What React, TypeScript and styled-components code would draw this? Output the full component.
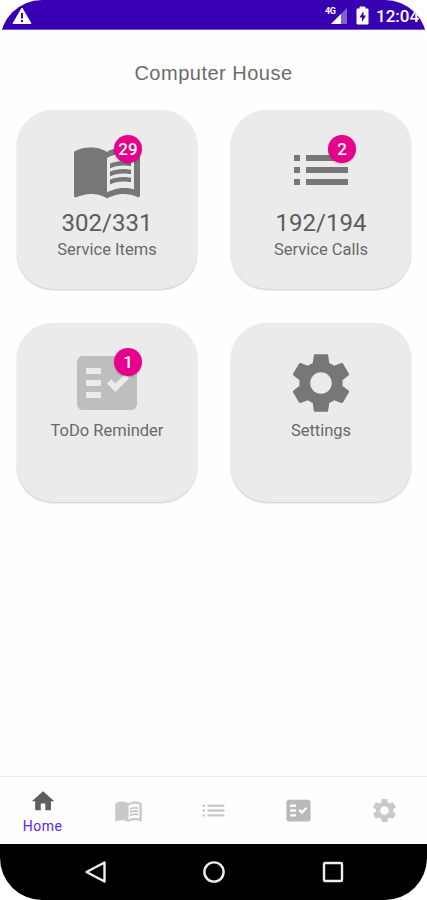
import React from 'react';
import styled, { createGlobalStyle } from 'styled-components';
import { MdMenuBook, MdList, MdFactCheck, MdSettings } from 'react-icons/md';

const GlobalStyle = createGlobalStyle`
  * { box-sizing: border-box; }
  body { margin: 0; background: #fff; font-family: Roboto, sans-serif; }
`;

const Screen = styled.div`
  width: 427px;
  height: 900px;
  display: flex;
  flex-direction: column;
  overflow: hidden;
  border-radius: 42px;
  background: #fefefe;
`;

const StatusBar = styled.header`
  height: 30px;
  flex: none;
  display: flex;
  align-items: center;
  padding: 2px 7px 0 12px;
  background: #3700b3;
  border-bottom: 1px solid #7257c4;
  color: #fff;
`;

const StatusIcons = styled.div`
  margin-left: auto;
  display: flex;
  align-items: center;
`;

const Clock = styled.span`
  width: 44px;
  margin-left: 7px;
  font-size: 17px;
  line-height: 20px;
  font-weight: 500;
  white-space: nowrap;
`;

const Title = styled.h1`
  margin: 30px 0 0;
  height: 26px;
  text-align: center;
  font: 400 20px/26px 'Liberation Sans', Arial, sans-serif;
  letter-spacing: 0.5px;
  color: #6b6b6b;
`;

const Main = styled.main`
  flex: 1;
`;

const Cards = styled.section`
  display: grid;
  grid-template-columns: 180px 180px;
  grid-auto-rows: 179px;
  gap: 34px;
  padding: 24px 0 0 17px;
`;

const Card = styled.article`
  display: flex;
  flex-direction: column;
  align-items: center;
  padding-top: 24px;
  border-radius: 36px;
  background: #ebebeb;
  box-shadow: 0 1px 2px rgba(0, 0, 0, 0.22);
`;

const IconHolder = styled.div<{ $color: string }>`
  position: relative;
  height: 72px;
  color: ${(p) => p.$color};
  font-size: 72px;
  line-height: 0;
`;

const Badge = styled.span`
  position: absolute;
  top: 1px;
  left: 43px;
  width: 28px;
  height: 28px;
  border-radius: 50%;
  background: #e6008c;
  box-shadow: 0 1px 2px rgba(0, 0, 0, 0.2);
  color: #fff;
  text-align: center;
  font-size: 17px;
  font-weight: 500;
  line-height: 29px;
`;

const Count = styled.div`
  margin-top: 2px;
  font-size: 24px;
  line-height: 30px;
  color: #5c5c5c;
`;

const Label = styled.div`
  font-size: 16.5px;
  line-height: 23px;
  color: #696969;
`;

const TabBar = styled.nav`
  height: 68px;
  flex: none;
  display: grid;
  grid-template-columns: repeat(5, 1fr);
  border-top: 1px solid #ececec;
`;

const Tab = styled.div<{ $color: string }>`
  display: flex;
  flex-direction: column;
  align-items: center;
  justify-content: center;
  color: ${(p) => p.$color};
  font-size: 29px;
`;

const TabLabel = styled.span`
  margin-top: 3px;
  font-size: 14px;
  line-height: 18px;
  letter-spacing: 0.5px;
  color: #6224e0;
`;

const SystemBar = styled.footer`
  height: 56px;
  flex: none;
  display: flex;
  align-items: center;
  justify-content: space-between;
  padding: 0 82px 0 83px;
  background: #000;
`;

const Warning = () => (
  <svg width="20" height="18" viewBox="0 0 20 18">
    <path d="M10 1 19 16.5H1Z" fill="#fff" stroke="#fff" strokeLinejoin="round" />
    <path d="M10 6v5.5M10 13v2" stroke="#3700b3" strokeWidth="2" />
  </svg>
);

const Signal = () => (
  <svg width="24" height="20" viewBox="0 0 24 20">
    <path d="M22 2V18H6Z" fill="#8062cf" />
    <path d="M16 8V18H6Z" fill="#fff" />
    <text x="0" y="8" fill="#fff" fontFamily="Roboto" fontSize="9" fontWeight="700" textLength="11">4G</text>
  </svg>
);

const Battery = () => (
  <svg width="13" height="20" viewBox="0 0 13 20">
    <path d="M4 1h5v2h3v15H1V3h3Z" fill="#fff" stroke="#fff" strokeLinejoin="round" />
    <path d="M7.5 5 3.5 11.5H6V16l4-6.5H7.5Z" fill="#3700b3" />
  </svg>
);

const House = () => (
  <svg width="27" height="27" viewBox="-0.5 -0.7 24 24">
    <path d="M10 20v-6h4v6h5v-8h3L12 3 2 12h3v8z" fill="#5e5e5e" />
  </svg>
);

const cards = [
  { Icon: MdMenuBook, color: '#777', badge: '29', count: '302/331', label: 'Service Items' },
  { Icon: MdList, color: '#777', badge: '2', count: '192/194', label: 'Service Calls' },
  { Icon: MdFactCheck, color: '#bebebe', badge: '1', label: 'ToDo Reminder' },
  { Icon: MdSettings, color: '#777', label: 'Settings' },
];

const tabs = [
  { Icon: MdMenuBook, color: '#c9c9c9' },
  { Icon: MdList, color: '#c9c9c9' },
  { Icon: MdFactCheck, color: '#b9b9b9' },
  { Icon: MdSettings, color: '#c9c9c9' },
];

export default function App() {
  return (
    <>
      <GlobalStyle />
      <Screen>
        <StatusBar>
          <Warning />
          <StatusIcons>
            <Signal />
            <svg width="7" height="1" />
            <Battery />
            <Clock>12:04</Clock>
          </StatusIcons>
        </StatusBar>
        <Main>
          <Title>Computer House</Title>
          <Cards>
            {cards.map(({ Icon, color, badge, count, label }) => (
              <Card key={label}>
                <IconHolder $color={color}>
                  <Icon />
                  {badge && <Badge>{badge}</Badge>}
                </IconHolder>
                {count && <Count>{count}</Count>}
                <Label>{label}</Label>
              </Card>
            ))}
          </Cards>
        </Main>
        <TabBar>
          <Tab $color="#5e5e5e">
            <House />
            <TabLabel>Home</TabLabel>
          </Tab>
          {tabs.map(({ Icon, color }, i) => (
            <Tab key={i} $color={color}>
              <Icon />
            </Tab>
          ))}
        </TabBar>
        <SystemBar>
          <svg width="24" height="24" viewBox="0 0 24 24" fill="none" stroke="#eee" strokeWidth="2.4">
            <path d="M21.5 2.5v19L3.5 12Z" strokeLinejoin="round" />
          </svg>
          <svg width="24" height="24" viewBox="0 0 24 24" fill="none" stroke="#eee" strokeWidth="2.4">
            <circle cx="12" cy="12" r="9.6" />
          </svg>
          <svg width="24" height="24" viewBox="0 0 24 24" fill="none" stroke="#eee" strokeWidth="2.4">
            <rect x="3" y="3" width="18" height="18" rx="1" />
          </svg>
        </SystemBar>
      </Screen>
    </>
  );
}
